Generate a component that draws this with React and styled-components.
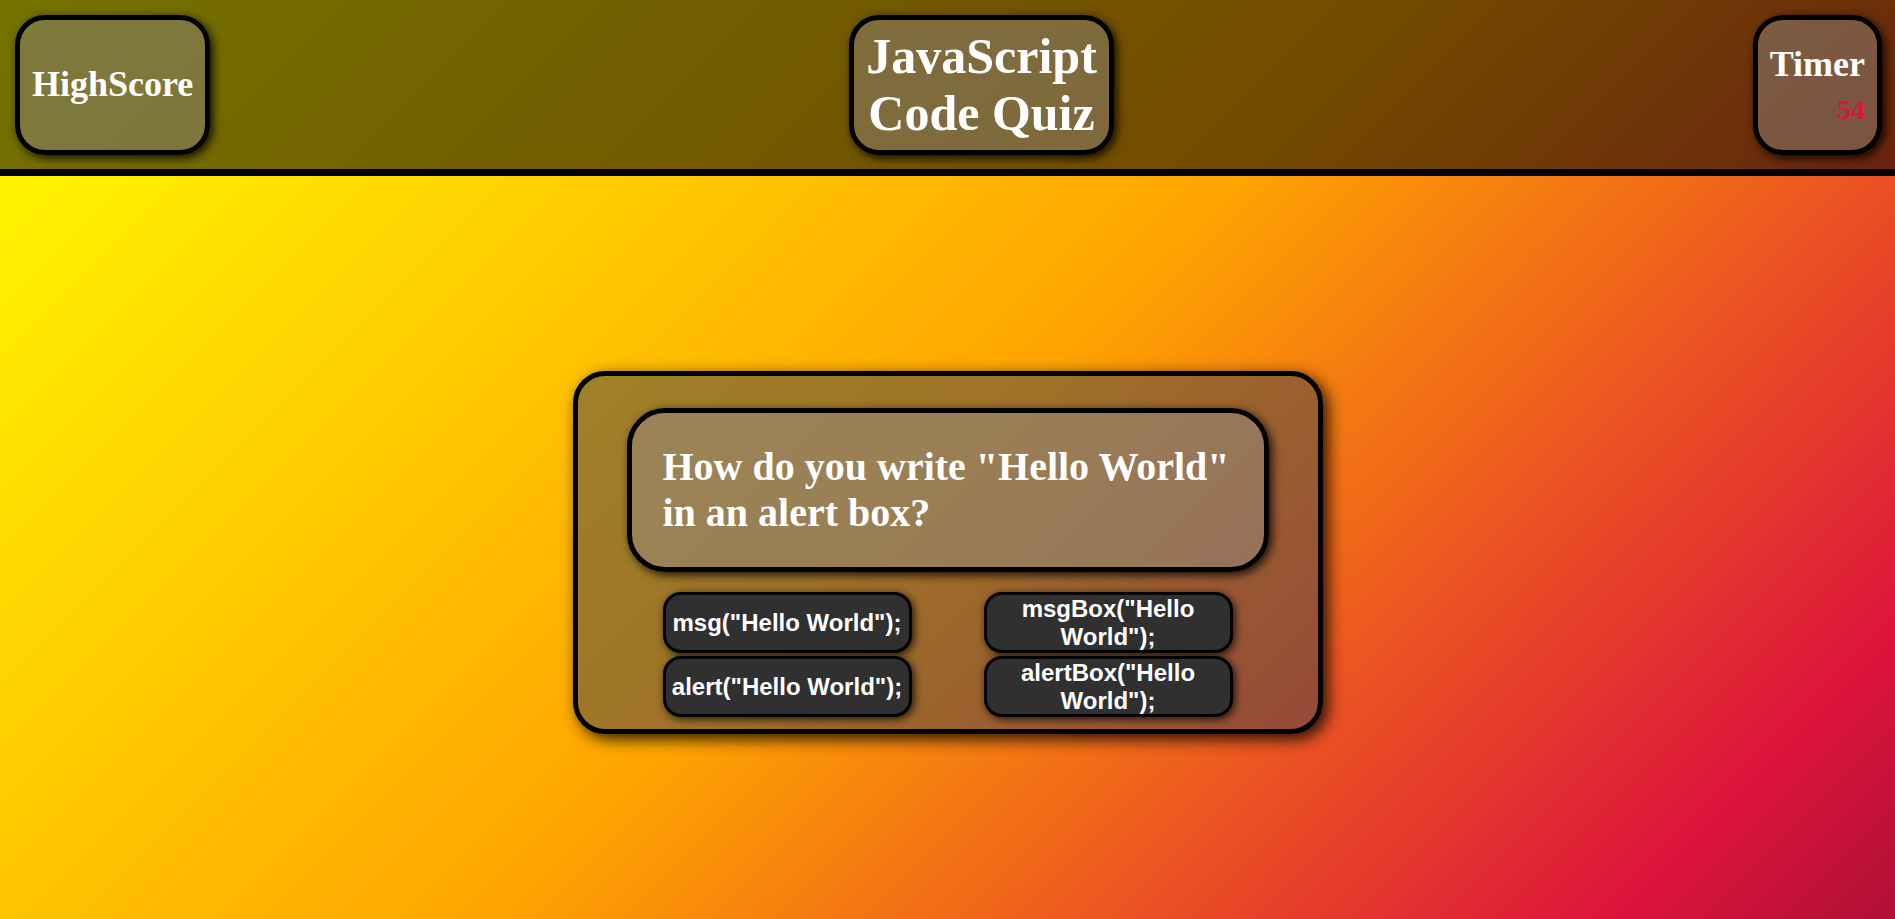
import React from 'react'
import styled, { createGlobalStyle } from 'styled-components'

const GlobalStyle = createGlobalStyle`
  * {
    box-sizing: border-box;
  }
  html, body {
    margin: 0;
    padding: 0;
  }
  body {
    min-height: 100vh;
    overflow: hidden;
    font-family: "Liberation Serif", "Times New Roman", serif;
    background: linear-gradient(135deg, #ffff00 0%, #ffa500 50%, #dc143c 90%, #b01035 100%);
    background-attachment: fixed;
  }
`

const Page = styled.div`
  min-height: 100vh;
`

const Header = styled.header`
  display: flex;
  justify-content: space-between;
  align-items: stretch;
  height: 176px;
  padding: 15px 13px 14px 15px;
  background: rgba(0, 0, 0, 0.55);
  border-bottom: 7px solid #000;
`

const HeaderBox = styled.div`
  display: flex;
  flex-direction: column;
  justify-content: center;
  align-items: ${props => (props.align === 'right' ? 'flex-end' : 'center')};
  gap: ${props => props.gap || 0}px;
  padding: 0 12px;
  border: 5px solid #000;
  border-radius: 30px;
  background: rgba(140, 130, 120, 0.5);
  box-shadow: 3px 3px 10px rgba(0, 0, 0, 0.85);
  color: #fff;
  font-weight: bold;
  text-align: center;
`

const BoxLabel = styled.div`
  font-size: ${props => props.size}px;
  line-height: 1.15;
`

const TimerValue = styled.div`
  font-size: 28px;
  line-height: 1.15;
  color: #dc143c;
`

const Main = styled.main`
  display: flex;
  justify-content: center;
  padding-top: 195px;
`

const QuizCard = styled.section`
  width: 750px;
  padding: 32px 49px 12px;
  border: 5px solid #000;
  border-radius: 32px;
  background: rgba(64, 64, 80, 0.5);
  box-shadow: 5px 5px 16px rgba(0, 0, 0, 0.85);
`

const Question = styled.h2`
  margin: 0;
  padding: 31px;
  border: 5px solid #000;
  border-radius: 38px;
  background: rgba(150, 140, 130, 0.5);
  box-shadow: 3px 3px 10px rgba(0, 0, 0, 0.85);
  color: #fff;
  font-size: 40px;
  font-weight: bold;
  line-height: 1.15;
`

const Answers = styled.div`
  display: grid;
  grid-template-columns: 1fr 1fr;
  row-gap: 3px;
  justify-items: center;
  margin-top: 20px;
`

const AnswerButton = styled.button`
  display: flex;
  align-items: center;
  justify-content: center;
  width: 249px;
  min-height: 61px;
  padding: 0 4px;
  border: 3px solid #000;
  border-radius: 18px;
  background: #303030;
  box-shadow: 2px 2px 8px rgba(0, 0, 0, 0.8);
  color: #fff;
  font-family: "Liberation Sans", Arial, sans-serif;
  font-size: 24px;
  font-weight: bold;
  line-height: 1.15;
  text-align: center;
  cursor: pointer;
`

const answers = [
  'msg("Hello World");',
  'msgBox("Hello World");',
  'alert("Hello World");',
  'alertBox("Hello World");',
]

const App = () => {
  return (
    <Page>
      <GlobalStyle />
      <Header>
        <HeaderBox>
          <BoxLabel size={36}>HighScore</BoxLabel>
        </HeaderBox>
        <HeaderBox>
          <BoxLabel size={50}>
            JavaScript
            <br />
            Code Quiz
          </BoxLabel>
        </HeaderBox>
        <HeaderBox align="right" gap={8}>
          <BoxLabel size={36}>Timer</BoxLabel>
          <TimerValue>54</TimerValue>
        </HeaderBox>
      </Header>
      <Main>
        <QuizCard>
          <Question>How do you write "Hello World" in an alert box?</Question>
          <Answers>
            {answers.map(answer => (
              <AnswerButton key={answer}>{answer}</AnswerButton>
            ))}
          </Answers>
        </QuizCard>
      </Main>
    </Page>
  )
}

export default App
